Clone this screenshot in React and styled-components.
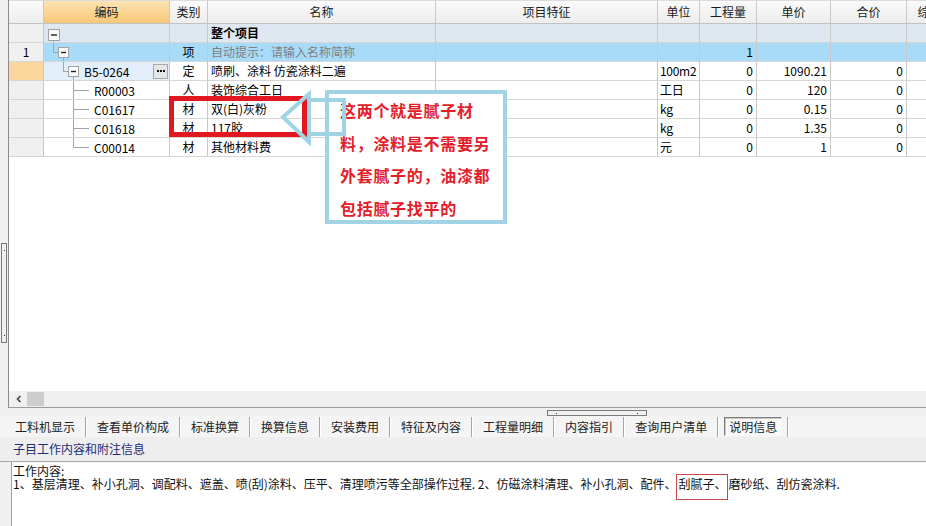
import styled, { createGlobalStyle } from "styled-components";

const COLS = "35px 126px 38px 228px 222px 42px 57px 74px 76px 70px";

const GlobalStyle = createGlobalStyle`
  html, body { margin: 0; padding: 0; }
  body {
    width: 926px;
    height: 526px;
    overflow: hidden;
    background: #fff;
    font-family: "Noto Sans CJK SC", "Noto Sans", sans-serif;
    font-size: 12px;
    color: #000;
  }
  * { box-sizing: border-box; }
`;

const headers = [
  { label: "", num: true },
  { label: "编码", active: true },
  { label: "类别" },
  { label: "名称" },
  { label: "项目特征" },
  { label: "单位" },
  { label: "工程量" },
  { label: "单价" },
  { label: "合价" },
  { label: "综合单价" },
];

const rows = [
  { tree: "root", name: "整个项目", bold: true, bg: "#dfe8f1" },
  { num: "1", tree: "l1", kind: "项", name: "自动提示：请输入名称简称", hint: true, qty: "1", bg: "#a8dbf7" },
  {
    tree: "l2", code: "B5-0264", kind: "定", name: "喷刷、涂料 仿瓷涂料二遍", unit: "100m2",
    qty: "0", price: "1090.21", total: "0", numBg: "#fcd79d", codeBg: "#e2effb", more: true,
  },
  { tree: "leaf", code: "R00003", kind: "人", name: "装饰综合工日", unit: "工日", qty: "0", price: "120", total: "0" },
  { tree: "leaf", code: "C01617", kind: "材", name: "双(白)灰粉", unit: "kg", qty: "0", price: "0.15", total: "0" },
  { tree: "leaf", code: "C01618", kind: "材", name: "117胶", unit: "kg", qty: "0", price: "1.35", total: "0" },
  { tree: "last", code: "C00014", kind: "材", name: "其他材料费", unit: "元", qty: "0", price: "1", total: "0" },
];

const tabs = ["工料机显示", "查看单价构成", "标准换算", "换算信息", "安装费用", "特征及内容", "工程量明细", "内容指引", "查询用户清单", "说明信息"];

function MinusBox({ x, y, s }) {
  return (
    <g>
      <rect x={x + 0.5} y={y + 0.5} width={s} height={s} fill="#fbfbfb" stroke="#a2a2a2" />
      <line x1={x + 3} y1={y + s / 2 + 0.5} x2={x + s - 2} y2={y + s / 2 + 0.5} stroke="#222" strokeWidth="1.4" />
    </g>
  );
}

function TreeGlyph({ type }) {
  const c = "#a4a4a4";
  if (type === "root") {
    return (
      <svg width="20" height="19">
        <line x1="9.5" y1="16" x2="9.5" y2="19" stroke={c} />
        <MinusBox x={4} y={5} s={11} />
      </svg>
    );
  }
  if (type === "l1") {
    return (
      <svg width="30" height="19">
        <path d="M9.5 0 V9.5 H14 M19.5 14 V19" stroke={c} fill="none" />
        <MinusBox x={14} y={4} s={10} />
      </svg>
    );
  }
  if (type === "l2") {
    return (
      <svg width="40" height="19">
        <path d="M19.5 0 V9.5 H24 M29.5 14 V19" stroke={c} fill="none" />
        <MinusBox x={24} y={4} s={10} />
      </svg>
    );
  }
  return (
    <svg width="50" height="19">
      <path d={type === "last" ? "M29.5 0 V9.5 H45" : "M29.5 0 V19 M29.5 9.5 H45"} stroke={c} fill="none" />
    </svg>
  );
}

export default function App() {
  return (
    <Page>
      <GlobalStyle />
      <Upper>
        <LeftStrip>
          <VHandle>
            <Dot />
            <Dot />
          </VHandle>
        </LeftStrip>
        <GridPane>
          <Table>
            <Row $header>
              {headers.map((h, i) => (
                <HeadCell key={i} $active={h.active}>{h.label}</HeadCell>
              ))}
            </Row>
            {rows.map((r, i) => (
              <Row key={i} $bg={r.bg}>
                <NumCell $bg={r.numBg}>{r.num}</NumCell>
                <CodeCell $bg={r.codeBg}>
                  <TreeGlyph type={r.tree} />
                  {r.code && <span>{r.code}</span>}
                  {r.more && (
                    <MoreButton>
                      <MoreDot />
                      <MoreDot />
                      <MoreDot />
                    </MoreButton>
                  )}
                </CodeCell>
                <Cell $align="center">{r.kind}</Cell>
                <Cell $bold={r.bold} $hint={r.hint}>{r.name}</Cell>
                <Cell />
                <UnitCell>{r.unit}</UnitCell>
                <Cell $align="right">{r.qty}</Cell>
                <Cell $align="right">{r.price}</Cell>
                <Cell $align="right">{r.total}</Cell>
                <Cell />
              </Row>
            ))}
          </Table>
          <HScroll>
            <ScrollArrow>
              <svg width="8" height="8" viewBox="0 0 8 8">
                <path d="M5.5 1 L2.5 4 L5.5 7" stroke="#444" strokeWidth="1.6" fill="none" />
              </svg>
            </ScrollArrow>
            <Thumb />
          </HScroll>
        </GridPane>
      </Upper>
      <SplitBar>
        <HHandle>
          <Dot />
          <Dot />
        </HHandle>
      </SplitBar>
      <TabBar>
        {tabs.map((t, i) => (
          <TabGroup key={t}>
            {i > 0 && <Separator />}
            <Tab>
              <TabLabel $active={t === "说明信息"}>{t}</TabLabel>
            </Tab>
          </TabGroup>
        ))}
        <Separator />
      </TabBar>
      <InfoTitle>子目工作内容和附注信息</InfoTitle>
      <Content>
        <ContentText>
          <div>工作内容:</div>
          <div>
            1、基层清理、补小孔洞、调配料、遮盖、喷(刮)涂料、压平、清理喷污等全部操作过程. 2、仿磁涂料清理、补小孔洞、配件、
            <Marked>刮腻子、</Marked>磨砂纸、刮仿瓷涂料.
          </div>
        </ContentText>
      </Content>

      <RedFrame />
      <Callout>
        <CalloutLine>这两个就是腻子材</CalloutLine>
        <CalloutLine>料，涂料是不需要另</CalloutLine>
        <CalloutLine>外套腻子的，油漆都</CalloutLine>
        <CalloutLine>包括腻子找平的</CalloutLine>
      </Callout>
      <ArrowMark width="72" height="60" viewBox="0 0 72 60">
        <polygon points="7,29 33,6 33,54" fill="none" stroke="#a0d4e5" strokeWidth="4" strokeLinejoin="miter" />
        <rect x="33" y="12" width="35" height="34" fill="none" stroke="#a0d4e5" strokeWidth="4" />
      </ArrowMark>
    </Page>
  );
}

const Page = styled.div`
  position: relative;
  width: 926px;
  height: 526px;
  display: flex;
  flex-direction: column;
  background: #f0f0f0;
  overflow: hidden;
`;

const Upper = styled.div`
  display: flex;
  height: 408px;
`;

const LeftStrip = styled.div`
  width: 8px;
  padding: 243px 0 0 1px;
  background: #f0f0f0;
`;

const VHandle = styled.div`
  width: 6px;
  height: 100px;
  border: 1px solid #7a7a7a;
  display: flex;
  flex-direction: column;
  justify-content: space-between;
  align-items: center;
  padding: 6px 0;
`;

const Dot = styled.span`
  width: 1px;
  height: 1px;
  background: #333;
`;

const GridPane = styled.div`
  flex: 1;
  min-width: 0;
  display: flex;
  flex-direction: column;
  border-left: 1px solid #8c8c8c;
  background: #fff;
`;

const Table = styled.div`
  flex: 1;
  overflow: hidden;
  background: #fff;
`;

const Row = styled.div`
  display: grid;
  grid-template-columns: ${COLS};
  height: ${(p) => (p.$header ? "24px" : "19px")};
  background: ${(p) => p.$bg || "#fff"};
`;

const HeadCell = styled.div`
  border-right: 1px solid #c9c9c9;
  border-bottom: 1px solid #c2c2c2;
  border-top: 1px solid #dcdcdc;
  background: ${(p) =>
    p.$active ? "linear-gradient(#fde3b4, #f7c877)" : "linear-gradient(#fafafa, #ededed)"};
  text-align: center;
  line-height: 22px;
  font-size: 12px;
  color: #1a1a1a;
  white-space: nowrap;
  overflow: hidden;
`;

const Cell = styled.div`
  border-right: 1px solid #c9c9c9;
  border-bottom: 1px solid #d6d6d6;
  padding: 0 3px;
  line-height: 18px;
  white-space: nowrap;
  overflow: hidden;
  text-align: ${(p) => p.$align || "left"};
  font-weight: ${(p) => (p.$bold ? 700 : 400)};
  color: ${(p) => (p.$hint ? "#808080" : "#000")};
`;

const UnitCell = styled(Cell)`
  padding: 0 1px 0 2px;
  letter-spacing: -0.3px;
`;

const NumCell = styled(Cell)`
  background: ${(p) => p.$bg || "#f0f0f0"};
  text-align: center;
`;

const CodeCell = styled.div`
  display: flex;
  align-items: center;
  border-right: 1px solid #c9c9c9;
  border-bottom: 1px solid #d6d6d6;
  background: ${(p) => p.$bg || "transparent"};
  white-space: nowrap;
  overflow: hidden;
  font-size: 12px;

  svg {
    flex-shrink: 0;
    align-self: flex-start;
  }
`;

const MoreButton = styled.span`
  margin-left: auto;
  margin-right: 1px;
  width: 15px;
  height: 15px;
  flex-shrink: 0;
  border: 1px solid #a8a8a8;
  background: #e6e6e6;
  display: flex;
  align-items: center;
  justify-content: center;
  gap: 1px;
`;

const MoreDot = styled.span`
  width: 2px;
  height: 2px;
  background: #111;
`;

const HScroll = styled.div`
  height: 17px;
  display: flex;
  align-items: center;
  background: #f0f0f0;
  border-bottom: 1px solid #9a9a9a;
  padding-left: 2px;
`;

const ScrollArrow = styled.span`
  width: 16px;
  display: flex;
  justify-content: center;
`;

const Thumb = styled.span`
  width: 17px;
  height: 14px;
  background: #cdcdcd;
`;

const SplitBar = styled.div`
  height: 8px;
  padding: 2px 0 0 547px;
`;

const HHandle = styled.div`
  width: 100px;
  height: 6px;
  border: 1px solid #7a7a7a;
  display: flex;
  align-items: center;
  justify-content: space-between;
  padding: 0 8px;
`;

const TabBar = styled.div`
  height: 21px;
  display: flex;
  align-items: stretch;
  padding-left: 5px;
  background: #f4f4f4;
`;

const TabGroup = styled.div`
  display: flex;
`;

const Separator = styled.span`
  width: 2px;
  border-left: 1px solid #a6a6a6;
  border-right: 1px solid #fff;
  margin: 1px 0 0;
`;

const Tab = styled.div`
  display: flex;
  align-items: center;
  padding: 0 5px;
`;

const TabLabel = styled.span`
  padding: 0 4px;
  line-height: 17px;
  font-size: 12px;
  color: #222;
  border: 1px solid transparent;
  ${(p) =>
    p.$active &&
    `
    border-color: #7c7c7c #f6f6f6 #f6f6f6 #7c7c7c;
    box-shadow: inset 1px 1px 0 #c8c8c8;
    background: #fafafa;
  `}
`;

const InfoTitle = styled.div`
  height: 25px;
  padding: 2px 0 0 13px;
  line-height: 20px;
  color: #1f2c78;
  font-size: 12px;
  background: #eeeeee;
  border-bottom: 1px solid #a6a6a6;
`;

const Content = styled.div`
  flex: 1;
  background: #fff;
  margin-left: 11px;
  border-left: 1px solid #a0a0a0;
`;

const ContentText = styled.div`
  padding: 2px 0 0 1px;
  line-height: 13px;
  font-size: 12px;
  white-space: nowrap;
  color: #111;
`;

const Marked = styled.span`
  border: 1px solid #c6484a;
  padding: 0 1px 7px;
`;

const RedFrame = styled.div`
  position: absolute;
  left: 169px;
  top: 96px;
  width: 138px;
  height: 41px;
  border: 5px solid #e3171f;
`;

const Callout = styled.div`
  position: absolute;
  left: 325px;
  top: 90px;
  width: 182px;
  height: 134px;
  border: 4px solid #a0d4e5;
  background: #fff;
  padding: 0 0 0 11px;
`;

const CalloutLine = styled.div`
  font-family: "Noto Sans CJK SC", sans-serif;
  font-weight: 700;
  font-size: 16px;
  letter-spacing: 0.7px;
  line-height: 32.5px;
  color: #e3202a;
  white-space: nowrap;
`;

const ArrowMark = styled.svg`
  position: absolute;
  left: 276px;
  top: 88px;
`;
